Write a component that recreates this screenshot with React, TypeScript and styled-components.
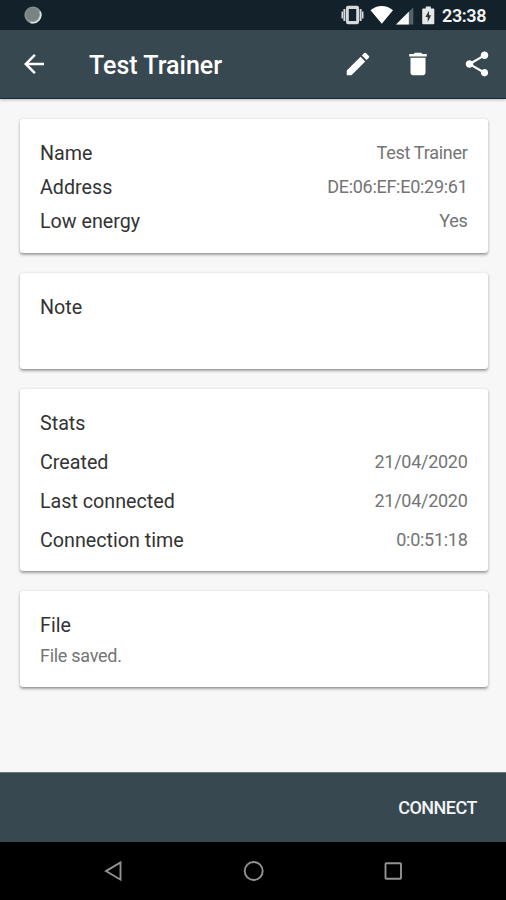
import React from "react";
import styled, { createGlobalStyle } from "styled-components";

const GlobalStyle = createGlobalStyle`
  * { box-sizing: border-box; }
  body { margin: 0; background: #000; }
`;

const Screen = styled.div`
  display: flex;
  flex-direction: column;
  width: 506px;
  height: 900px;
  overflow: hidden;
  background: #f7f7f7;
  font-family: Roboto, "Liberation Sans", sans-serif;
`;

const StatusBar = styled.header`
  display: flex;
  align-items: center;
  justify-content: space-between;
  flex: none;
  height: 30px;
  padding: 0 18px 0 24px;
  background: #13212a;
`;

const StatusIcons = styled.div`
  display: flex;
  align-items: center;
`;

const StatusGlyphs = styled.svg`
  display: block;
  width: 96px;
  height: 20px;
`;

const SyncDot = styled.svg`
  display: block;
  width: 18px;
  height: 18px;
`;

const Clock = styled.span`
  width: 46px;
  margin-left: 5px;
  padding-top: 1px;
  color: #f2f4f5;
  font-size: 18px;
  font-weight: 600;
  line-height: 20px;
  letter-spacing: -0.4px;
  white-space: nowrap;
`;

const AppBar = styled.div`
  display: flex;
  align-items: center;
  flex: none;
  height: 69px;
  padding: 0 14px 0 19px;
  background: #384850;
  border-bottom: 1px solid #172a3c;
  box-shadow: 0 1px 3px rgba(0, 0, 0, 0.25);
`;

const Title = styled.h1`
  flex: 1;
  margin: 3px 0 0 40px;
  color: #fff;
  font-size: 25px;
  font-weight: 500;
  line-height: 30px;
`;

const Actions = styled.div`
  display: flex;
  gap: 29.5px;
`;

const IconButton = styled.button`
  display: block;
  width: 30px;
  height: 30px;
  padding: 0;
  border: 0;
  background: none;
  color: #fff;

  svg {
    display: block;
    width: 30px;
    height: 30px;
    fill: currentColor;
  }
`;

const Content = styled.main`
  display: flex;
  flex-direction: column;
  flex: 1;
  gap: 20px;
  padding: 20px 18.5px 0 20px;
`;

const Card = styled.section<{ $height: number; $top: number }>`
  flex: none;
  height: ${(p) => p.$height}px;
  padding: ${(p) => p.$top}px 20px 0;
  background: #fff;
  border-radius: 3px;
  box-shadow: 0 1.5px 3px rgba(0, 0, 0, 0.34), 0 1px 1px rgba(0, 0, 0, 0.08);
`;

const Row = styled.div<{ $height: number }>`
  display: flex;
  align-items: center;
  justify-content: space-between;
  height: ${(p) => p.$height}px;
`;

const Label = styled.span`
  padding-top: 2px;
  color: #333;
  font-size: 19.7px;
  line-height: 24px;
  white-space: nowrap;
`;

const Value = styled.span`
  color: #747474;
  font-size: 18px;
  line-height: 22px;
  letter-spacing: -0.28px;
  white-space: nowrap;
`;

const BottomBar = styled.footer`
  display: flex;
  align-items: center;
  justify-content: flex-end;
  flex: none;
  height: 70px;
  padding: 0 29px 0 0;
  background: #384850;
  border-top: 1px solid #68757b;
`;

const ConnectButton = styled.button`
  padding: 0;
  border: 0;
  background: none;
  color: #f3f5f8;
  font: 500 18px/22px Roboto, "Liberation Sans", sans-serif;
  letter-spacing: -0.5px;
`;

const NavBar = styled.nav`
  flex: none;
  height: 58px;
  background: #000;

  svg {
    display: block;
  }
`;

const actions = [
  {
    label: "Edit",
    path: "M3 17.25V21h3.75L17.81 9.94l-3.75-3.75L3 17.25zM20.71 7.04a1 1 0 0 0 0-1.41l-2.34-2.34a1 1 0 0 0-1.41 0l-1.83 1.83 3.75 3.75 1.83-1.83z",
  },
  {
    label: "Delete",
    path: "M6 19c0 1.1.9 2 2 2h8c1.1 0 2-.9 2-2V7H6v12zM19 4h-3.5l-1-1h-5l-1 1H5v2h14V4z",
  },
  {
    label: "Share",
    path: "M18 16.08c-.76 0-1.44.3-1.96.77L8.91 12.7c.05-.23.09-.46.09-.7s-.04-.47-.09-.7l7.05-4.11c.54.5 1.25.81 2.04.81 1.66 0 3-1.34 3-3s-1.34-3-3-3-3 1.34-3 3c0 .24.04.47.09.7L8.04 9.81C7.5 9.31 6.79 9 6 9c-1.66 0-3 1.34-3 3s1.34 3 3 3c.79 0 1.5-.31 2.04-.81l7.12 4.16c-.05.21-.08.43-.08.65 0 1.61 1.31 2.92 2.92 2.92s2.92-1.31 2.92-2.92-1.31-2.92-2.92-2.92z",
  },
];

const device = [
  ["Name", "Test Trainer"],
  ["Address", "DE:06:EF:E0:29:61"],
  ["Low energy", "Yes"],
];

const stats = [
  ["Created", "21/04/2020"],
  ["Last connected", "21/04/2020"],
  ["Connection time", "0:0:51:18"],
];

export default function App() {
  return (
    <>
      <GlobalStyle />
      <Screen>
        <StatusBar>
          <SyncDot viewBox="0 0 18 18">
            <circle cx="9" cy="9" r="8.6" fill="#899393" />
            <path d="M16 5.5A8 8 0 0 1 6.5 16.4" fill="none" stroke="#dce2e2" strokeWidth="1.7" />
            <circle cx="8.4" cy="8.3" r="6.8" fill="#788383" />
          </SyncDot>
          <StatusIcons>
            <StatusGlyphs viewBox="0 0 96 20">
              <g fill="#d5d9db">
                <path d="M0.500 6.500h1.500v7H0.500zM2.400 4h2v12h-2zM18.600 4h2v12h-2zM21 6.500H22.500v7H21z" />
                <path fillRule="evenodd" d="M7 .7h9a2 2 0 0 1 2 2v14.600a2 2 0 0 1-2 2H7a2 2 0 0 1-2-2V2.700a2 2 0 0 1 2-2zM7.800 4v12h7.400V4z" />
              </g>
              <path fill="#fff" d="M29.500 5.200C36-.5 45.500-.5 52 5.200L40.800 18.800z" />
              <path fill="#53626a" d="M72.300 2.300v17.200H55z" />
              <path fill="#fff" d="M67.800 6.800v12.700H55z" />
              <path fill="#e6e8e8" d="M84.800 1.600h5v2h2.500q1 0 1 1v13.700q0 1-1 1H82.200q-1 0-1-1V4.600q0-1 1-1h2.600z" />
              <path fill="#26343b" d="M88 5.700 84.400 12.100h2.300v4.800l3.500-6.600H88z" />
            </StatusGlyphs>
            <Clock>23:38</Clock>
          </StatusIcons>
        </StatusBar>

        <AppBar>
          <IconButton aria-label="Back">
            <svg viewBox="0 0 24 24">
              <path d="M20 11H7.830l5.590-5.590L12 4l-8 8 8 8 1.410-1.410L7.830 13H20v-2z" />
            </svg>
          </IconButton>
          <Title>Test Trainer</Title>
          <Actions>
            {actions.map((action) => (
              <IconButton key={action.label} aria-label={action.label}>
                <svg viewBox="0 0 24 24">
                  <path d={action.path} />
                </svg>
              </IconButton>
            ))}
          </Actions>
        </AppBar>

        <Content>
          <Card $height={134} $top={17}>
            {device.map(([label, value]) => (
              <Row key={label} $height={34}>
                <Label>{label}</Label>
                <Value>{value}</Value>
              </Row>
            ))}
          </Card>
          <Card $height={96} $top={17}>
            <Row $height={34}>
              <Label>Note</Label>
            </Row>
          </Card>
          <Card $height={182} $top={14}>
            <Row $height={39}>
              <Label>Stats</Label>
            </Row>
            {stats.map(([label, value]) => (
              <Row key={label} $height={39}>
                <Label>{label}</Label>
                <Value>{value}</Value>
              </Row>
            ))}
          </Card>
          <Card $height={96} $top={17}>
            <Row $height={34}>
              <Label>File</Label>
            </Row>
            <Row $height={28}>
              <Value>File saved.</Value>
            </Row>
          </Card>
        </Content>

        <BottomBar>
          <ConnectButton>CONNECT</ConnectButton>
        </BottomBar>

        <NavBar>
          <svg width="506" height="58" viewBox="0 0 506 58" fill="none" stroke="#929292" strokeWidth="1.900">
            <path d="M120.500 20.500v17.200L106 29.100z" />
            <circle cx="253.700" cy="29" r="9" />
            <rect x="385.500" y="21.300" width="15.500" height="15.500" rx="0.800" />
          </svg>
        </NavBar>
      </Screen>
    </>
  );
}
